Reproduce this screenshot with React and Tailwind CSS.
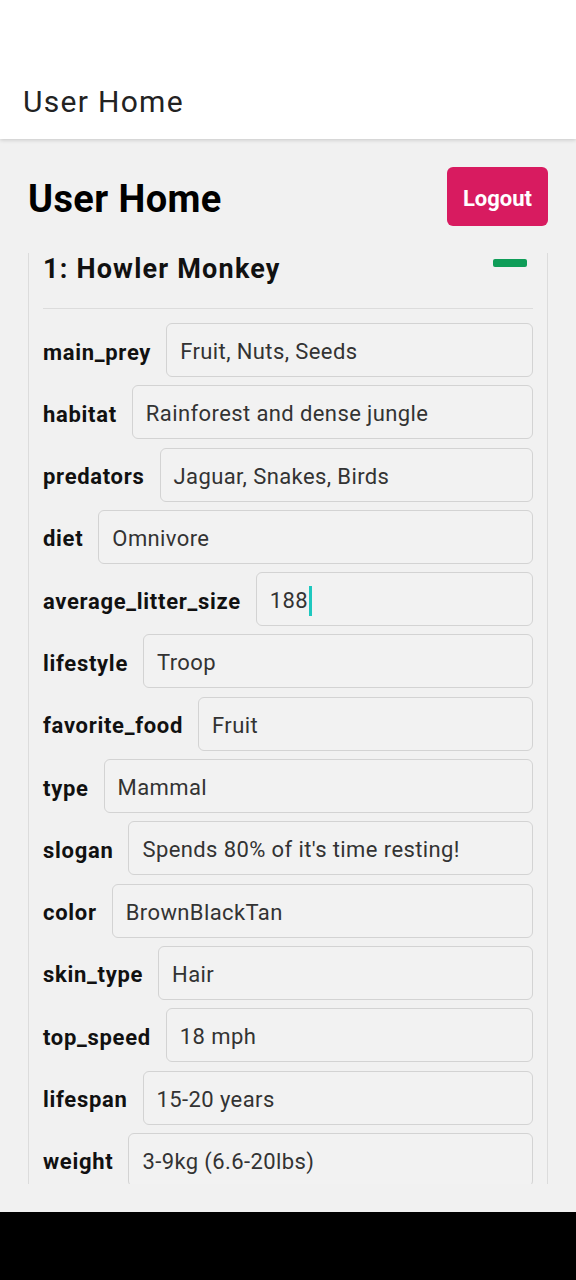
const animal = [
  ["main_prey", "Fruit, Nuts, Seeds"],
  ["habitat", "Rainforest and dense jungle"],
  ["predators", "Jaguar, Snakes, Birds"],
  ["diet", "Omnivore"],
  ["average_litter_size", "188", true],
  ["lifestyle", "Troop"],
  ["favorite_food", "Fruit"],
  ["type", "Mammal"],
  ["slogan", "Spends 80% of it's time resting!"],
  ["color", "BrownBlackTan"],
  ["skin_type", "Hair"],
  ["top_speed", "18 mph"],
  ["lifespan", "15-20 years"],
  ["weight", "3-9kg (6.6-20lbs)"],
];

function Field({ label, value, focused }) {
  return (
    <div className="flex h-[54px] items-center gap-[15px]">
      <span className="shrink-0 pt-[4px] text-[22px] font-bold tracking-[0.7px] text-[#111]">{label}</span>
      <div className="flex h-full flex-1 items-center rounded-[6px] border border-[#d3d3d3] bg-[#f2f2f2] px-[13px] pt-[3px] text-[22px] tracking-[0.4px] text-[#333]">
        {value}
        {focused && <span className="ml-[1px] h-[30px] w-[3px] bg-[#1ec8bf]" />}
      </div>
    </div>
  );
}

export default function App() {
  return (
    <div className="flex h-[1280px] flex-col bg-white font-['Roboto',sans-serif]">
      <header className="relative z-10 h-[139px] bg-white pt-[80px] pl-[23px] shadow-[0_1px_4px_rgba(0,0,0,0.18)]">
        <h1 className="text-[30px] leading-[44px] tracking-[1.3px] text-[#222]">User Home</h1>
      </header>

      <main className="h-[1073px] bg-[#f1f1f1] px-[28px] pt-[28px]">
        <div className="flex h-[59px] items-center justify-between">
          <h2 className="pt-[5px] text-[38px] font-bold tracking-[0.4px] text-black">User Home</h2>
          <button className="h-[59px] w-[101px] rounded-[6px] bg-[#d81b60] pt-[3px] text-[22px] font-bold text-white">
            Logout
          </button>
        </div>

        <div className="mt-[27px] h-[931px] overflow-hidden">
          <div className="-mt-4 rounded-[6px] border border-[#dcdcdc] px-[14px] pt-[15px] pb-6">
            <div className="flex items-start justify-between border-b border-[#dcdcdc] pb-[23px]">
              <h3 className="text-[27px] font-bold leading-[32px] tracking-[1.2px] text-[#111]">1: Howler Monkey</h3>
              <span className="mt-[6px] mr-[6px] h-[8px] w-[34px] rounded-[2px] bg-[#0f9d58]" />
            </div>
            <div className="mt-[14px] flex flex-col gap-[8.3px]">
              {animal.map(([label, value, focused]) => (
                <Field key={label} label={label} value={value} focused={focused} />
              ))}
            </div>
          </div>
        </div>
      </main>

      <div className="flex-1 bg-black" />
    </div>
  );
}
